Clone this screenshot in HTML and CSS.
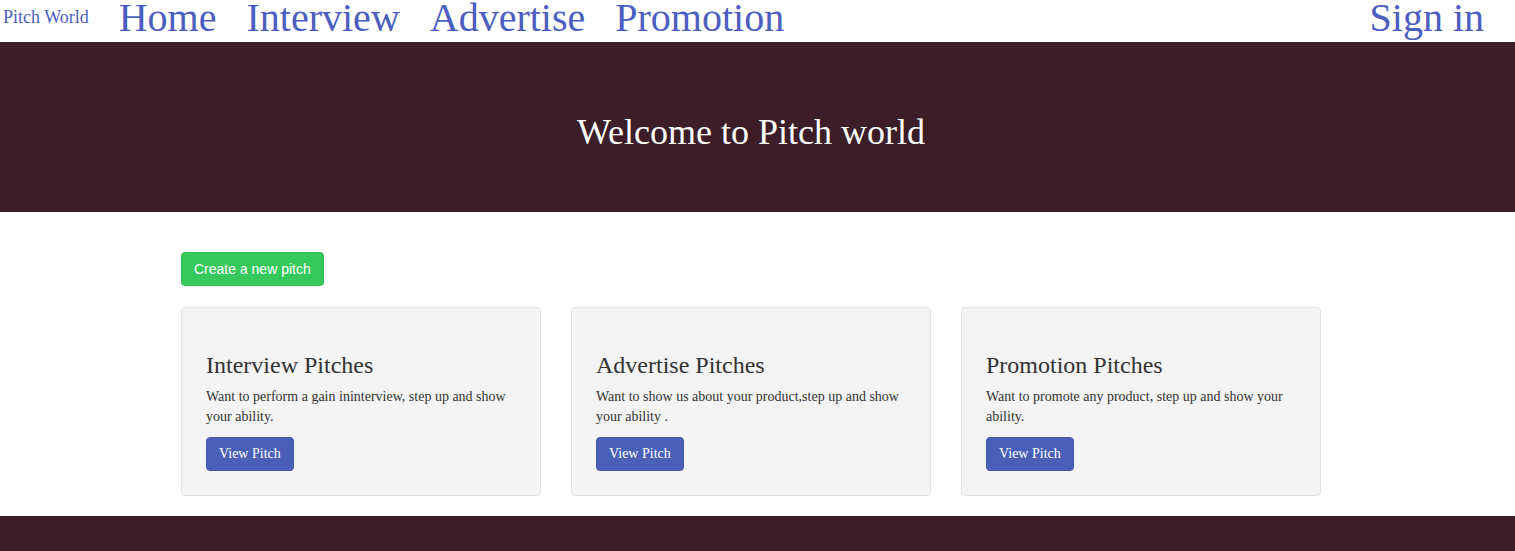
FILE: index.html
```html
<!DOCTYPE html>
<html lang="en">
<head>
<meta charset="utf-8">
<title>Pitch World</title>
<link rel="stylesheet" href="styles.css">
</head>
<body>
<nav class="navbar">
  <a class="brand" href="#">Pitch World</a>
  <ul class="nav-links">
    <li><a href="#">Home</a></li>
    <li><a href="#">Interview</a></li>
    <li><a href="#">Advertise</a></li>
    <li><a href="#">Promotion</a></li>
  </ul>
  <a class="nav-link signin" href="#">Sign in</a>
</nav>
<header class="hero">
  <h1 class="hero-title">Welcome to Pitch world</h1>
</header>
<main class="page">
  <div class="container">
    <a class="btn btn-create" href="#">Create a new pitch</a>
    <div class="cards">
      <div class="card">
        <h3 class="card-title">Interview Pitches</h3>
        <p class="card-text">Want to perform a gain ininterview, step up and show your ability.</p>
        <a class="btn btn-view" href="#">View Pitch</a>
      </div>
      <div class="card">
        <h3 class="card-title">Advertise Pitches</h3>
        <p class="card-text">Want to show us about your product,step up and show your ability .</p>
        <a class="btn btn-view" href="#">View Pitch</a>
      </div>
      <div class="card">
        <h3 class="card-title">Promotion Pitches</h3>
        <p class="card-text">Want to promote any product, step up and show your ability.</p>
        <a class="btn btn-view" href="#">View Pitch</a>
      </div>
    </div>
  </div>
</main>
<footer class="footer"></footer>
</body>
</html>
```
FILE: styles.css
```css
* { box-sizing: border-box; }
html, body { margin: 0; padding: 0; }
body {
  font-family: "Liberation Serif", "Times New Roman", serif;
  color: #333;
  background: #fff;
  font-size: 14px;
  line-height: 20px;
}
a { text-decoration: none; }

.navbar {
  display: flex;
  align-items: flex-start;
  height: 42px;
  padding-left: 3px;
  background: #fff;
}
.brand {
  font-size: 18px;
  line-height: 20px;
  padding-top: 7px;
  color: #4b5ec0;
}
.nav-links {
  display: flex;
  gap: 30px;
  list-style: none;
  margin: 0 0 0 30px;
  padding: 0;
}
.nav-links a, .signin {
  display: block;
  font-size: 40px;
  line-height: 36px;
  color: #4b5ec0;
}
.signin {
  margin-left: auto;
  margin-right: 31px;
}

.hero {
  height: 170px;
  background: #3b1e27;
  padding: 71px 13px 0 0;
  text-align: center;
}
.hero-title {
  margin: 0;
  font-size: 36px;
  line-height: 1.1;
  font-weight: 400;
  color: #fff;
}

.page {
  padding: 40px 13px 0 0;
}
.container {
  width: 1140px;
  margin: 0 auto;
}
.btn {
  display: inline-block;
  padding: 6px 12px;
  font-size: 14px;
  line-height: 20px;
  border: 1px solid transparent;
  border-radius: 4px;
  color: #fff;
}
.btn-create {
  font-family: "Liberation Sans", Arial, sans-serif;
  background: #34c95a;
  border-color: #2fbb52;
  margin-bottom: 21px;
}
.cards {
  display: grid;
  grid-template-columns: repeat(3, 1fr);
  gap: 30px;
}
.card {
  background: #f4f4f4;
  border: 1px solid #e3e3e3;
  border-radius: 4px;
  padding: 24px;
  margin-bottom: 20px;
}
.card-title {
  margin: 20px 0 9px;
  font-size: 24px;
  line-height: 1.1;
  font-weight: 400;
  color: #333;
}
.card-text {
  margin: 0 0 10px;
}
.btn-view {
  background: #4a5fb8;
  border-color: #4257ae;
}

.footer {
  height: 60px;
  background: #3b1e27;
}
```
